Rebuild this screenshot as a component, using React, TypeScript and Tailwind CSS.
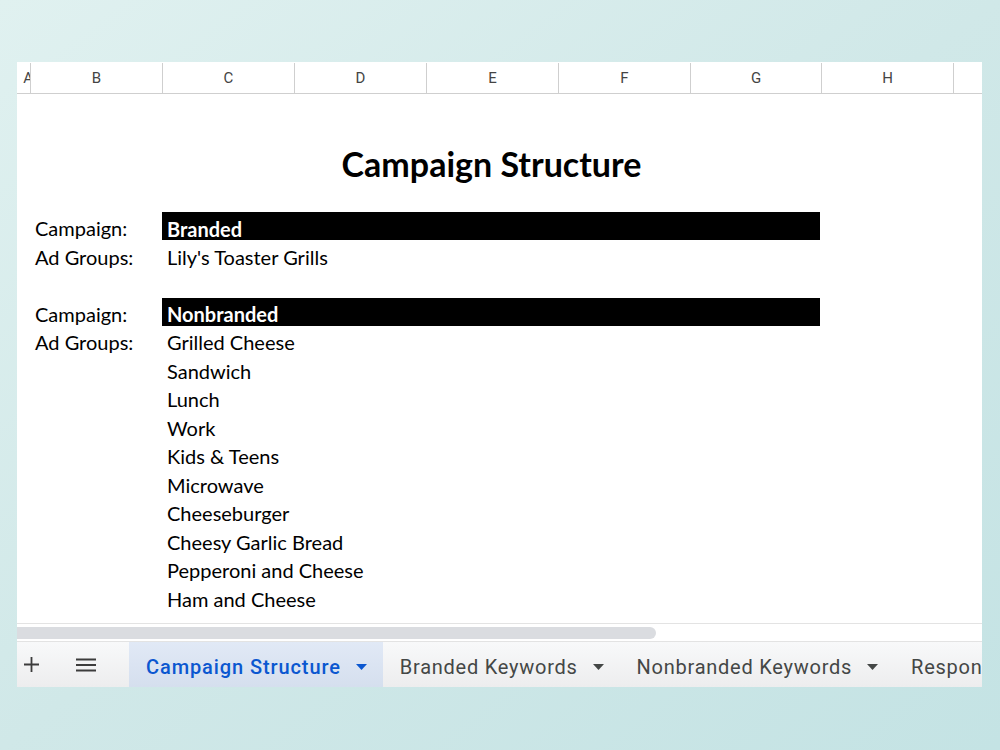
import React from "react";

const cols = [
  { l: "B", w: "w-[132px]" },
  { l: "C", w: "w-[132px]" },
  { l: "D", w: "w-[132px]" },
  { l: "E", w: "w-[132px]" },
  { l: "F", w: "w-[132px]" },
  { l: "G", w: "w-[131px]" },
  { l: "H", w: "w-[132px]" },
];

const groups = [
  "Grilled Cheese",
  "Sandwich",
  "Lunch",
  "Work",
  "Kids & Teens",
  "Microwave",
  "Cheeseburger",
  "Cheesy Garlic Bread",
  "Pepperoni and Cheese",
  "Ham and Cheese",
];

function Row({ label, value, bar }: { label?: string; value?: string; bar?: boolean }) {
  return (
    <div className="flex h-[28.5px] items-center">
      <div className="w-[145px] pl-[18px] text-[20px] text-black leading-none pt-[4px]">{label}</div>
      {bar ? (
        <div className="w-[658px] h-[28px] bg-black text-white font-bold text-[20px] pl-[5px] flex items-center pt-[5px] leading-none">
          {value}
        </div>
      ) : (
        <div className="pl-[5px] text-[20px] text-black leading-none pt-[4px]">{value}</div>
      )}
    </div>
  );
}

function Caret({ color }: { color: string }) {
  return (
    <svg width="11" height="6" viewBox="0 0 11 6" className="ml-[15px] shrink-0">
      <path d="M0 0 L11 0 L5.5 6 Z" fill={color} />
    </svg>
  );
}

export default function App() {
  return (
    <div className="w-[1000px] h-[750px] overflow-hidden bg-gradient-to-br from-[#e0f1f0] via-[#d0e8e8] to-[#c4e3e4] pt-[62px] pl-[17px]">
      <div className="w-[965px] h-[625px] flex flex-col">
        <div className="bg-white flex-1 flex flex-col overflow-hidden">
          {/* header */}
          <div className="flex h-[32px] border-b border-[#cfcfcf] shrink-0 font-['Roboto',sans-serif] text-[15px] text-[#444] bg-white pt-[1px]">
            <div className="w-[13px] shrink-0 overflow-hidden flex items-center justify-end">
              <span className="mr-[-3px]">A</span>
            </div>
            {cols.map((c) => (
              <div key={c.l} className={`${c.w} shrink-0 border-l border-[#cfcfcf] flex items-center justify-center`}>
                {c.l}
              </div>
            ))}
            <div className="flex-1 border-l border-[#cfcfcf]" />
          </div>
          {/* body */}
          <div className="flex-1 font-['Lato',sans-serif] text-black">
            <div className="h-[118px] flex items-start justify-center">
              <div className="mt-[53px] mr-[16px] text-[34px] font-bold leading-none">Campaign Structure</div>
            </div>
            <Row label="Campaign:" value="Branded" bar />
            <Row label="Ad Groups:" value="Lily's Toaster Grills" />
            <Row />
            <Row label="Campaign:" value="Nonbranded" bar />
            {groups.map((g, i) => (
              <Row key={g} label={i === 0 ? "Ad Groups:" : undefined} value={g} />
            ))}
          </div>
          {/* scrollbar */}
          <div className="h-[19px] shrink-0 border-t border-b border-[#e3e3e3] flex items-center">
            <div className="w-[639px] h-[12px] bg-[#dadce0] rounded-r-full" />
          </div>
        </div>
        {/* tab bar */}
        <div className="h-[45px] shrink-0 bg-gradient-to-b from-[#f8f9fa] to-[#ededee] flex items-stretch font-['Roboto',sans-serif] text-[20px] overflow-hidden whitespace-nowrap">
          <div className="w-[22px] shrink-0 flex items-center justify-end">
            <svg width="15" height="15" viewBox="0 0 15 15">
              <path d="M7.5 0 V15 M0 7.5 H15" stroke="#3c3c3c" strokeWidth="1.8" />
            </svg>
          </div>
          <div className="w-[90px] shrink-0 flex items-center pl-[37px]">
            <svg width="20" height="14" viewBox="0 0 20 14">
              <path d="M0 1.5 H20 M0 7 H20 M0 12.5 H20" stroke="#3c3c3c" strokeWidth="1.8" />
            </svg>
          </div>
          <div className="shrink-0 flex items-center pl-[17px] pr-[16px] pt-[5px] tracking-[0.9px] bg-gradient-to-b from-[#e1e9f6] to-[#d5dfee] text-[#0b57d0] font-medium">
            Campaign Structure
            <Caret color="#0b57d0" />
          </div>
          <div className="shrink-0 flex items-center pl-[17px] pr-[18px] pt-[5px] tracking-[0.75px] text-[#444746]">
            Branded Keywords
            <Caret color="#444746" />
          </div>
          <div className="shrink-0 flex items-center pl-[15px] pr-[18px] pt-[5px] tracking-[0.75px] text-[#444746]">
            Nonbranded Keywords
            <Caret color="#444746" />
          </div>
          <div className="shrink-0 flex items-center pl-[15px] pt-[5px] tracking-[0.75px] text-[#444746]">Responsive Ads</div>
        </div>
      </div>
    </div>
  );
}
